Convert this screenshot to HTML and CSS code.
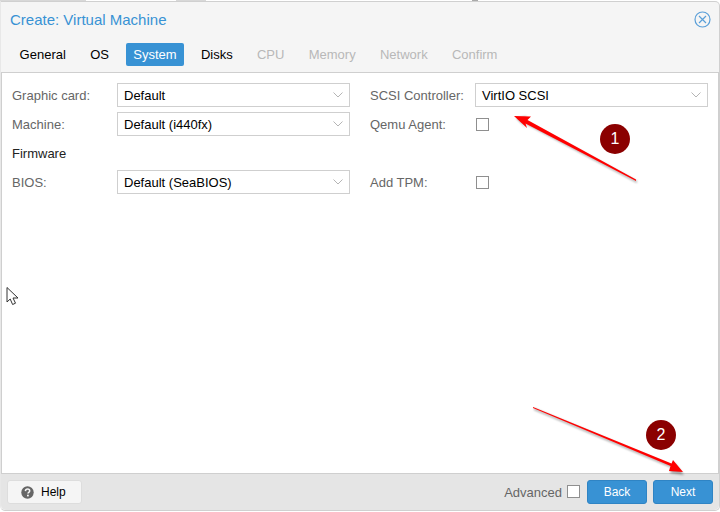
FILE: index.html
```html
<!DOCTYPE html>
<html lang="en">
<head>
<meta charset="utf-8">
<title>Create: Virtual Machine</title>
<link rel="stylesheet" href="styles.css">
</head>
<body>
<div class="backdrop"><i class="frag f1"></i><i class="frag f2"></i><i class="frag f3"></i></div>
<div class="window">
  <header class="titlebar">
    <span class="title">Create: Virtual Machine</span>
    <svg class="close" width="17" height="17" viewBox="0 0 17 17"><circle cx="8.5" cy="8.5" r="7.5" fill="none" stroke="#5a9fd8" stroke-width="1.2"/><path d="M5 5l7 7M12 5l-7 7" stroke="#5a9fd8" stroke-width="1.2" fill="none"/></svg>
  </header>
  <nav class="tabs">
    <span class="tab">General</span>
    <span class="tab">OS</span>
    <span class="tab active">System</span>
    <span class="tab">Disks</span>
    <span class="tab off">CPU</span>
    <span class="tab off">Memory</span>
    <span class="tab off">Network</span>
    <span class="tab off">Confirm</span>
  </nav>
  <main class="panel">
    <div class="form">
      <div class="row"><label>Graphic card:</label><div class="select"><span>Default</span><svg class="chev" width="10" height="6" viewBox="0 0 10 6"><path d="M0.5 0.5L5 5L9.5 0.5" fill="none" stroke="#b5b5b5"/></svg></div></div>
      <div class="row"><label>SCSI Controller:</label><div class="select"><span>VirtIO SCSI</span><svg class="chev" width="10" height="6" viewBox="0 0 10 6"><path d="M0.5 0.5L5 5L9.5 0.5" fill="none" stroke="#b5b5b5"/></svg></div></div>
      <div class="row"><label>Machine:</label><div class="select"><span>Default (i440fx)</span><svg class="chev" width="10" height="6" viewBox="0 0 10 6"><path d="M0.5 0.5L5 5L9.5 0.5" fill="none" stroke="#b5b5b5"/></svg></div></div>
      <div class="row"><label>Qemu Agent:</label><span class="check"></span></div>
      <div class="row"><span class="heading">Firmware</span></div>
      <div class="row"></div>
      <div class="row"><label>BIOS:</label><div class="select"><span>Default (SeaBIOS)</span><svg class="chev" width="10" height="6" viewBox="0 0 10 6"><path d="M0.5 0.5L5 5L9.5 0.5" fill="none" stroke="#b5b5b5"/></svg></div></div>
      <div class="row"><label>Add TPM:</label><span class="check"></span></div>
    </div>
  </main>
  <footer class="footer">
    <button class="btn help"><svg width="13" height="13" viewBox="0 0 13 13"><circle cx="6.5" cy="6.5" r="6.2" fill="#666"/><path d="M4.4 5.1C4.5 3.8 5.4 3.1 6.6 3.1C7.8 3.1 8.7 3.8 8.7 4.9C8.7 6.3 6.9 6.3 6.9 7.6" fill="none" stroke="#f5f5f5" stroke-width="1.5"/><rect x="6" y="8.7" width="1.8" height="1.7" fill="#f5f5f5"/></svg><span>Help</span></button>
    <span class="advanced">Advanced</span>
    <span class="check adv"></span>
    <button class="btn primary">Back</button>
    <button class="btn primary">Next</button>
  </footer>
</div>
<svg class="overlay" width="720" height="512" viewBox="0 0 720 512">
  <defs><filter id="s" x="-10%" y="-20%" width="120%" height="140%"><feGaussianBlur stdDeviation="1"/></filter></defs>
  <g fill="#000" opacity=".35" filter="url(#s)">
    <polygon points="637,183 522,122 526,128 516,118 527,116 524,120 637,181"/>
    <polygon points="534,410 672,468 670,473 684,475 675,463 673,466 534,408"/>
  </g>
  <polygon fill="#f00" points="636,181 525.5,123.5 527,128 514,116 531,116.5 527.5,120 636,179.5"/>
  <polygon fill="#f00" points="533,408 670.5,466 669,471 683,472 673,460 671.5,463.5 533,407"/>
  <path d="M7 287.5V302L10.2 299L12.6 304.5L15.5 303.2L13 298H18Z" fill="#fff" stroke="#333" stroke-width="1"/>
</svg>
<span class="badge b1">1</span>
<span class="badge b2">2</span>
</body>
</html>
```
FILE: styles.css
```css
* { box-sizing: border-box; }
html, body { margin: 0; padding: 0; }
body {
  width: 720px; height: 512px; overflow: hidden; position: relative;
  background: #fff; font-family: "Liberation Sans", Arial, sans-serif;
  font-size: 13px; color: #000;
}
.backdrop { height: 1px; background: #fff; display: flex; }
.frag { display: block; height: 1px; background: #d8d8d8; }
.f1 { width: 86px; }
.f2 { width: 30px; margin-left: 90px; }
.f3 { width: 6px; margin-left: 266px; background: #aaa; }
.window {
  width: 720px; height: 510px; display: flex; flex-direction: column;
  background: #f5f5f5; border: 1px solid #d0d0d0; border-left-color: #e8e8e8;
  border-radius: 0 5px 5px 5px;
}
.titlebar {
  height: 37px; display: flex; align-items: center; justify-content: space-between;
  padding: 0 8px 2px 9px; flex: none;
}
.title { font-size: 15px; color: #3892d4; }
.tabs { flex: none; height: 33px; display: flex; gap: 10.3px; padding: 4px 0 0 11.6px; align-items: flex-start; }
.tab { height: 23px; line-height: 23px; padding: 0 7px; border-radius: 2px; color: #000; }
.tab.active { background: #3892d4; color: #fff; }
.tab.off { color: #b8b8b8; }
.panel { flex: 1; background: #fff; border: 1px solid #cfcfcf; padding: 10px 0 0 10px; }
.form { display: grid; grid-template-columns: 338px 338px; column-gap: 20px; row-gap: 5px; grid-auto-rows: 24px; }
.row { display: flex; align-items: center; }
.row label { width: 105px; flex: none; color: #666; }
.heading { color: #222; padding-top: 1px; }
.select {
  width: 233px; height: 24px; border: 1px solid #cfcfcf; background: #fff;
  display: flex; align-items: center; justify-content: space-between; padding: 0 6px 0 6px;
}
.check { width: 13px; height: 13px; border: 1px solid #8f8f8f; background: #fff; display: block; margin-left: 1px; }
.footer { flex: none; height: 36px; background: #e5e5e5; display: flex; align-items: flex-start; padding: 6px 6px 0 6px; border-radius: 0 0 5px 5px; }
.btn { font-family: inherit; font-size: 12px; height: 24px; padding: 0; border-radius: 3px; cursor: pointer; }
.help {
  width: 75px; background: #f5f5f5; border: 1px solid #ddd; color: #000;
  display: flex; align-items: center; gap: 7px; padding-left: 13px; margin-right: auto;
}
.advanced { color: #666; margin-top: 5px; margin-right: 5px; }
.adv { margin: 5px 7px 0 0; }
.primary { width: 60px; background: #3892d4; border: 1px solid #2f84c4; color: #fff; margin-left: 6px; }
.adv + .primary { margin-left: 0; }
.overlay { position: absolute; left: 0; top: 0; pointer-events: none; }
.badge {
  position: absolute; width: 30px; height: 30px; border-radius: 50%;
  background: #8b0000; color: #fff; font-size: 16px; line-height: 30px; text-align: center;
}
.b1 { left: 600px; top: 124px; }
.b2 { left: 646px; top: 420px; }
```
